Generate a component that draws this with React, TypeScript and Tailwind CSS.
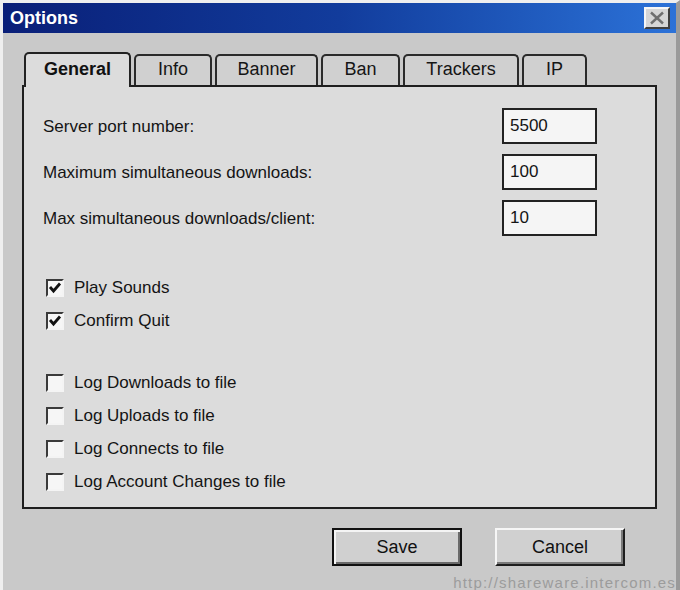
import React from "react";

const font = { fontFamily: '"Liberation Sans", Arial, sans-serif' };

function Checkbox({ label, checked }: { label: string; checked?: boolean }) {
  return (
    <div className="flex h-[33px] items-center">
      <div className="ml-[3px] flex h-[18px] w-[18px] items-center justify-center border-l-2 border-t-2 border-r-2 border-b-2 border-l-[#3a3a3a] border-t-[#3a3a3a] border-r-[#f4f4f4] border-b-[#f4f4f4] bg-[#f6f6f6]">
        {checked && (
          <svg width="14" height="14" viewBox="0 0 14 14">
            <polyline points="2,6 5.5,10 12,2.5" fill="none" stroke="#111" strokeWidth="2.8" />
          </svg>
        )}
      </div>
      <span className="ml-[10px] text-[17px] leading-none text-[#141414]">{label}</span>
    </div>
  );
}

function Field({ label, value }: { label: string; value: string }) {
  return (
    <div className="flex h-[36px] items-center justify-between">
      <span className="text-[17px] leading-none text-[#141414]">{label}</span>
      <div className="flex h-[36px] w-[95px] items-center border-2 border-[#222] bg-[#f5f5f5] pl-[6px] text-[17px] text-[#141414]">
        {value}
      </div>
    </div>
  );
}

const tabs = [
  { name: "Info", w: "w-[78px]" },
  { name: "Banner", w: "w-[103px]" },
  { name: "Ban", w: "w-[79px]" },
  { name: "Trackers", w: "w-[116px]" },
  { name: "IP", w: "w-[65px]" },
];

export default function App() {
  return (
    <div
      style={font}
      className="relative h-[590px] w-[680px] overflow-hidden border-l-[3px] border-t-[3px] border-r-[4px] border-l-[#efefef] border-t-[#efefef] border-r-[#9a9a9a] bg-[#c9c9c9]"
    >
      {/* title bar */}
      <div className="flex h-[30px] items-center justify-between bg-gradient-to-r from-[#0a1f78] via-[#123c9c] to-[#2c72d8] pl-[7px] pr-[6px]">
        <span className="text-[18px] font-bold text-white">Options</span>
        <div className="flex h-[22px] w-[26px] items-center justify-center border-l-2 border-t-2 border-r-2 border-b-2 border-l-[#f6f6f6] border-t-[#f6f6f6] border-r-[#404040] border-b-[#404040] bg-[#d6d6d6]">
          <svg width="16" height="14" viewBox="0 0 16 14">
            <line x1="2" y1="1.5" x2="14" y2="12.5" stroke="#6f6f6f" strokeWidth="2.4" />
            <line x1="14" y1="1.5" x2="2" y2="12.5" stroke="#6f6f6f" strokeWidth="2.4" />
          </svg>
        </div>
      </div>

      <div className="pl-[19px] pt-[17px]">
        {/* tabs */}
        <div className="flex h-[35px] items-end pl-[2px]">
          <div className="relative z-10 -mb-[2px] flex h-[35px] w-[107px] items-center justify-center rounded-t-[5px] border-2 border-b-0 border-[#222] bg-[#dcdcdc] pb-[3px] text-[18px] font-bold text-[#111]">
            General
          </div>
          {tabs.map((t) => (
            <div
              key={t.name}
              className={`${t.w} ml-[3px] flex h-[31px] items-center justify-center rounded-t-[5px] border-2 border-b-0 border-[#2a2a2a] bg-[#d0d0d0] pb-[2px] text-[18px] text-[#151515]`}
            >
              {t.name}
            </div>
          ))}
        </div>

        {/* panel */}
        <div className="h-[424px] w-[635px] border-2 border-[#1e1e1e] bg-[#dcdcdc] pl-[19px] pr-[58px] pt-[21px]">
          <div className="flex flex-col gap-[10px]">
            <Field label="Server port number:" value="5500" />
            <Field label="Maximum simultaneous downloads:" value="100" />
            <Field label="Max simultaneous downloads/client:" value="10" />
          </div>
          <div className="mt-[35px]">
            <Checkbox label="Play Sounds" checked />
            <Checkbox label="Confirm Quit" checked />
          </div>
          <div className="mt-[29px]">
            <Checkbox label="Log Downloads to file" />
            <Checkbox label="Log Uploads to file" />
            <Checkbox label="Log Connects to file" />
            <Checkbox label="Log Account Changes to file" />
          </div>
        </div>

        {/* buttons */}
        <div className="mt-[19px] flex w-[635px] justify-end gap-[33px] pr-[32px]">
          <button className="h-[38px] w-[130px] border-2 border-[#111] bg-[#d0d0d0] text-[18px] text-[#111] shadow-[inset_2px_2px_0_#f4f4f4,inset_-2px_-2px_0_#6a6a6a]">
            Save
          </button>
          <button className="h-[38px] w-[130px] border-l-2 border-t-2 border-r-2 border-b-2 border-l-[#f6f6f6] border-t-[#f6f6f6] border-r-[#1e1e1e] border-b-[#1e1e1e] bg-[#d0d0d0] text-[18px] text-[#111] shadow-[inset_-2px_-2px_0_#7a7a7a]">
            Cancel
          </button>
        </div>
      </div>

      <span className="absolute bottom-[0px] right-[0px] text-[15px] leading-none tracking-[1.2px] text-[#9c9c9c]">
        http://shareware.intercom.es
      </span>
    </div>
  );
}
